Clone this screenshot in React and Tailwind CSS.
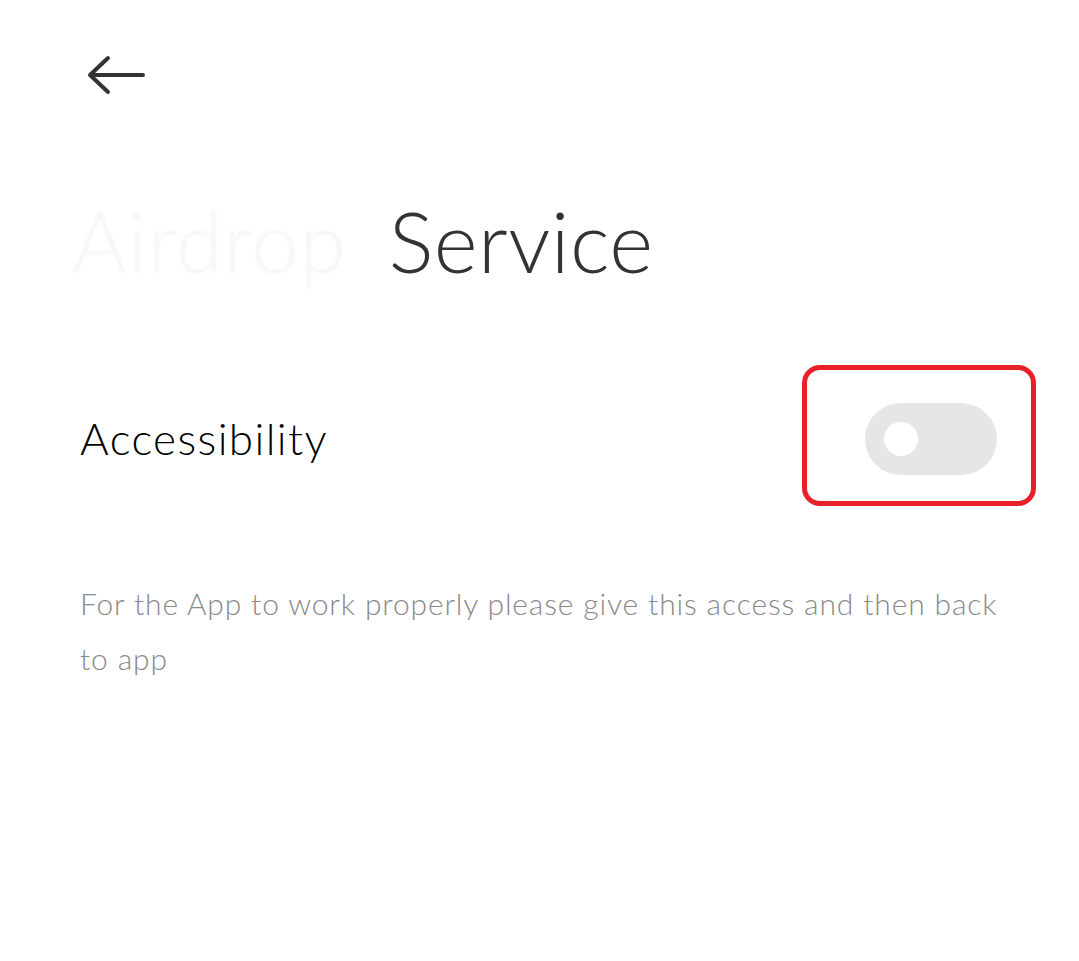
import React from "react";

export default function App() {
  return (
    <div className="w-[1079px] h-[961px] bg-white relative overflow-hidden" style={{ fontFamily: "Lato, 'Open Sans', sans-serif" }}>
      <div className="pl-[80px] pt-[52px]">
        <svg width="64" height="46" viewBox="0 0 64 46" className="ml-[4px]">
          <path d="M6 23 H59 M24 6 L6 23 L24 40" fill="none" stroke="#333" strokeWidth="4" strokeLinecap="round" strokeLinejoin="round" />
        </svg>
      </div>
      <div className="flex items-center pl-[72px] mt-[88px] h-[110px]">
        <span className="text-[84px] font-light text-[#f6f6f6] leading-none tracking-[1px] blur-[1px]">Airdrop</span>
        <span className="ml-[42px] text-[84px] font-light text-[#333] leading-none tracking-[0.5px]">Service</span>
      </div>
      <div className="flex items-center justify-between pl-[80px] pr-[43px] mt-[69px]">
        <span className="text-[44px] font-light text-black tracking-[1.4px] translate-y-[2px]">Accessibility</span>
        <div className="w-[234px] h-[141px] border-[5px] border-[#e8202a] rounded-[18px] flex items-center pl-[58px] pt-[7px]">
          <div className="w-[132px] h-[72px] rounded-full bg-[#e6e6e6] flex items-center pl-[19px]">
            <div className="w-[34px] h-[34px] rounded-full bg-white"></div>
          </div>
        </div>
      </div>
      <p className="pl-[80px] pr-[59px] mt-[70px] text-[30px] font-light text-[#8a8a8a] leading-[55px] tracking-[0.85px]">
        For the App to work properly please give this access and then back to app
      </p>
    </div>
  );
}
